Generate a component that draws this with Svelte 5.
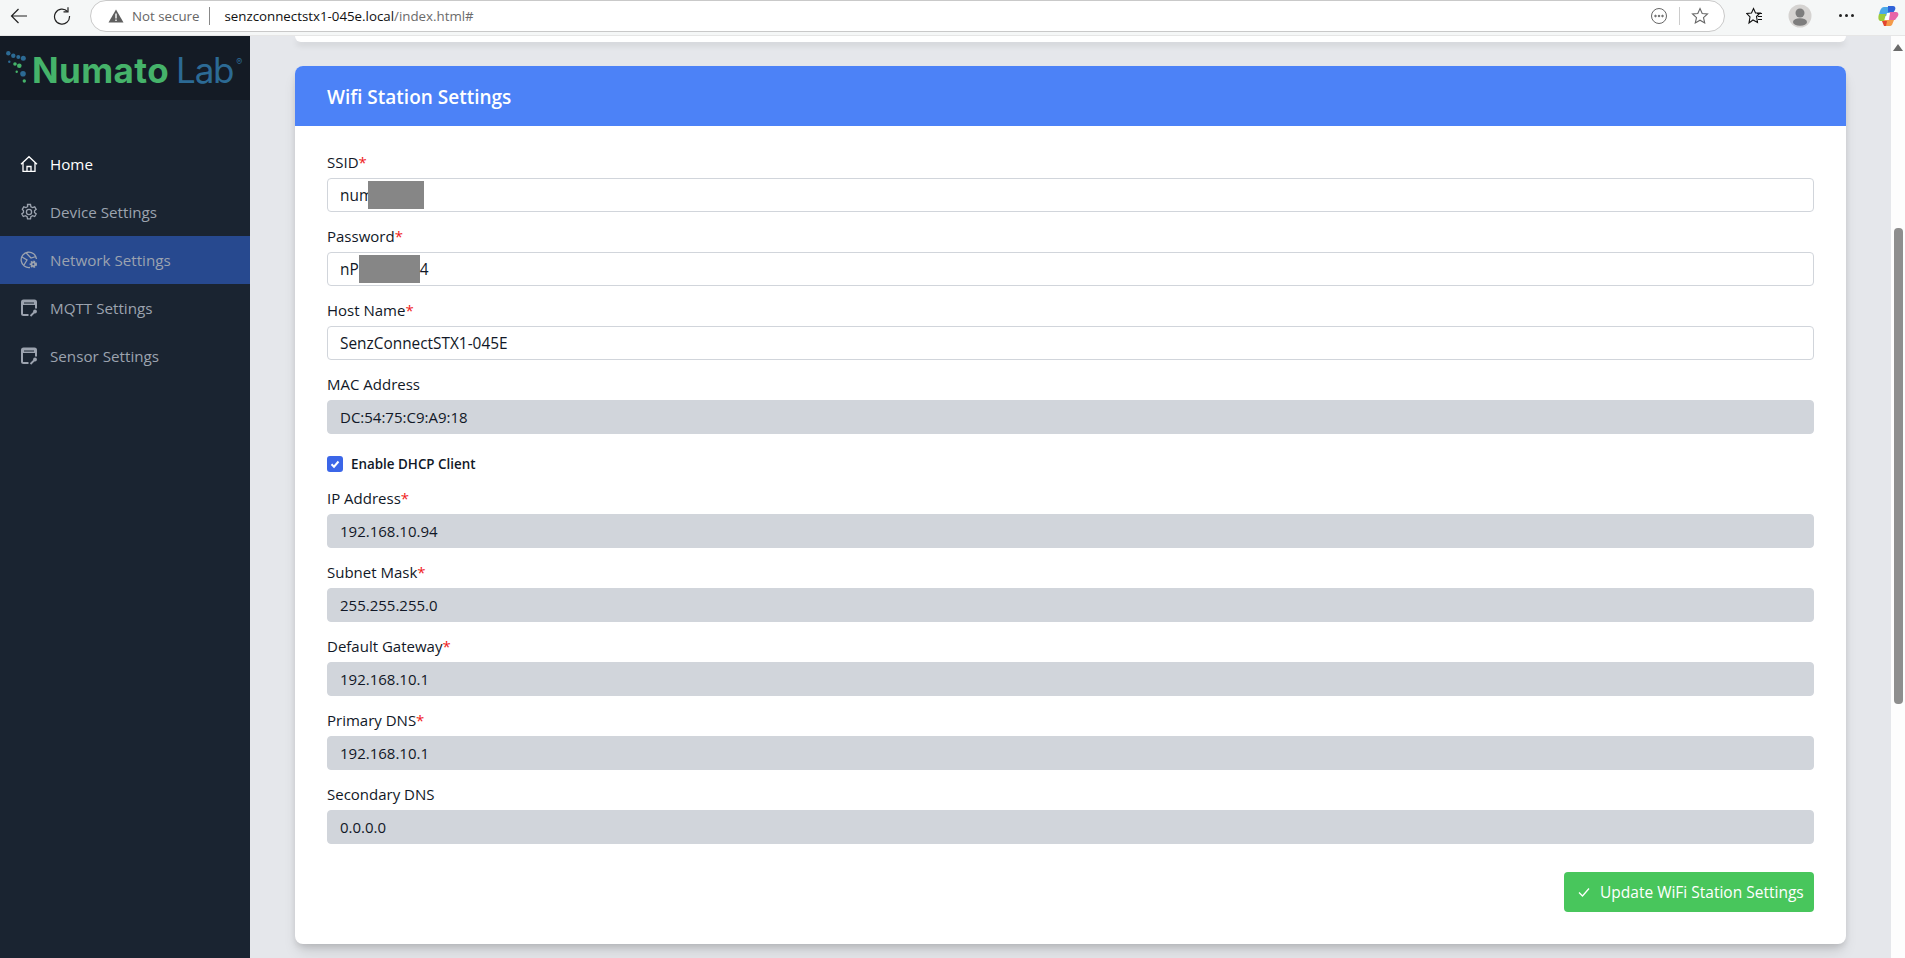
<script>
  const navItems = [
    { label: 'Home', icon: 'home', active: false, current: true },
    { label: 'Device Settings', icon: 'gear' },
    { label: 'Network Settings', icon: 'globe', active: true },
    { label: 'MQTT Settings', icon: 'card' },
    { label: 'Sensor Settings', icon: 'card' }
  ];

  const topFields = [
    { label: 'SSID', value: 'num', required: true, mask: 'mask-ssid' },
    { label: 'Password', value: 'nP', tail: '4', required: true, mask: 'mask-pass' },
    { label: 'Host Name', value: 'SenzConnectSTX1-045E', required: true },
    { label: 'MAC Address', value: 'DC:54:75:C9:A9:18', disabled: true }
  ];

  const ipFields = [
    { label: 'IP Address', value: '192.168.10.94', required: true, disabled: true },
    { label: 'Subnet Mask', value: '255.255.255.0', required: true, disabled: true },
    { label: 'Default Gateway', value: '192.168.10.1', required: true, disabled: true },
    { label: 'Primary DNS', value: '192.168.10.1', required: true, disabled: true },
    { label: 'Secondary DNS', value: '0.0.0.0', disabled: true }
  ];
</script>

{#snippet field(f)}
  <div class="field">
    <div class="label">{f.label}{#if f.required}<span class="req">*</span>{/if}</div>
    <div class="input" class:disabled={f.disabled}>
      <span>{f.value}</span>
      {#if f.mask}<span class="mask {f.mask}"></span>{/if}
      {#if f.tail}<span>{f.tail}</span>{/if}
    </div>
  </div>
{/snippet}

<div class="window">
  <header class="toolbar">
    <svg class="tb-back" width="18" height="18" viewBox="0 0 18 18" fill="none" stroke="#222" stroke-width="1.2"><path d="M17 9H1.500M8.500 2 1.500 9l7 7" /></svg>
    <svg class="tb-reload" width="18" height="18" viewBox="0 0 18 18" fill="none" stroke="#222" stroke-width="1.2"><path d="M14.500 4.500A7.500 7.500 0 1 0 16.500 9" /><path d="M10.500 4.800h4.500v-4.500" /></svg>
    <div class="addr">
      <svg width="16" height="14" viewBox="0 0 16 14"><path d="M8 0.500 15.500 13.500H0.500Z" fill="#5f5f5f" /><rect x="7.300" y="4.500" width="1.400" height="5" fill="#fff" /><rect x="7.300" y="10.500" width="1.400" height="1.500" fill="#fff" /></svg>
      <span class="insecure">Not secure</span>
      <span class="addr-sep"></span>
      <span class="url">senzconnectstx1-045e.local<span class="url-path">/index.html#</span></span>
      <span class="addr-spacer"></span>
      <svg width="18" height="18" viewBox="0 0 18 18" fill="none" stroke="#666" stroke-width="1"><circle cx="9" cy="9" r="7.500" /><circle cx="5.500" cy="9" r="0.800" fill="#666" /><circle cx="9" cy="9" r="0.800" fill="#666" /><circle cx="12.500" cy="9" r="0.800" fill="#666" /></svg>
      <span class="addr-sep2"></span>
      <svg width="18" height="18" viewBox="0 0 18 18" fill="none" stroke="#666" stroke-width="1.100"><path d="M9 1.500 11.200 6.500 16.500 7 12.500 10.600 13.700 16 9 13.200 4.300 16 5.500 10.600 1.500 7 6.800 6.500Z" /></svg>
    </div>
    <svg class="tb-favs" width="18" height="18" viewBox="0 0 18 18" fill="none" stroke="#111" stroke-width="1.100"><path d="M7.500 1.500 9.500 6H14L10.500 9.500 11.500 15.500 7 13 3 16 4 10 0.800 6.500 5.500 6Z" /><path d="M11 6.500h5M12 9.500h4M12 12.500h4" /></svg>
    <svg class="tb-avatar" width="24" height="24" viewBox="0 0 24 24"><circle cx="12" cy="12" r="11.500" fill="#d5d3d1" /><circle cx="12" cy="9" r="4.500" fill="#7d7d7d" /><ellipse cx="12" cy="18" rx="7" ry="3.800" fill="#7d7d7d" /></svg>
    <div class="tb-dots"><i></i><i></i><i></i></div>
    <svg class="tb-copilot" width="22" height="22" viewBox="0 0 22 22">
      <path d="M7 2h8l-4 9H2C2 7 4 2 7 2Z" fill="#4aa8e8" />
      <path d="M11 1h5c2 0 3 2 2 4l-2 3-5-1Z" fill="#2f62d8" />
      <path d="M13 7h6c2 0 3 2 2 4l-3 4h-6Z" fill="#e765a8" />
      <path d="M2 9h7l-2 7H3C1 15 1 12 2 9Z" fill="#9ccb3c" />
      <path d="M7 15h10l-2 5c-1 1-2 1-3 1H7Z" fill="#f49a4a" />
      <path d="M5 16h5l-1 5H7Z" fill="#e2452f" />
      <path d="M10 8h3l-2 7H8Z" fill="#fff" />
    </svg>
  </header>

  <div class="body">
    <aside class="sidebar">
      <div class="logo">
        <svg class="logo-mark" width="24" height="34" viewBox="0 0 24 34" fill="#2c6a94">
          <circle cx="3.300" cy="2.300" r="2.200" /><circle cx="8.300" cy="4.700" r="2.200" /><circle cx="13.300" cy="6" r="2" /><circle cx="18.300" cy="7.300" r="2.500" />
          <circle cx="4.300" cy="10.700" r="1.200" />
          <circle cx="10" cy="13" r="1.800" fill="#45b36a" /><circle cx="14.300" cy="14.700" r="2.300" fill="#45b36a" />
          <circle cx="11.700" cy="20.700" r="1.200" fill="#45b36a" /><circle cx="18" cy="22.700" r="2.800" />
          <circle cx="19.300" cy="30" r="1.700" fill="#45b36a" />
        </svg>
        <span class="logo-numato">Numato</span><span class="logo-lab">Lab</span><span class="logo-reg">®</span>
      </div>
      <nav class="nav">
        {#each navItems as item}
          <a class="nav-item" class:active={item.active} class:current={item.current} href="#top">
            <svg width="18" height="18" viewBox="0 0 18 18" fill="none" stroke="currentColor" stroke-width="1.300">
              {#if item.icon === 'home'}
                <path d="M1 9.200 9 1.700l8 7.500M3 7.800V16.300H15V7.800M7 16.300V11.500H11V16.300" />
              {:else if item.icon === 'gear'}
                <circle cx="9" cy="9" r="2.600" />
                <path d="M7.500 1.500h3l.4 2.200 1.700.9 2.100-.8 1.500 2.500-1.700 1.500v1.700l1.700 1.500-1.500 2.500-2.100-.8-1.700.9-.4 2.200h-3l-.4-2.200-1.700-.9-2.100.8-1.500-2.500 1.700-1.500V7.800L2.300 6.300l1.500-2.500 2.100.8 1.700-.9Z" />
              {:else if item.icon === 'globe'}
                <path d="M10 16.500A7.700 7.700 0 1 1 16.500 8" />
                <path d="M2 6 7 9l-3 5M6 1.800 11 7l5-1.500" />
                <circle cx="13.300" cy="13.300" r="2.700" fill="currentColor" stroke-width="2" stroke-dasharray="1.500 1" />
                <circle cx="13.300" cy="13.300" r="1" fill="#27498f" stroke="none" />
              {:else}
                <path d="M8.500 16H3.500C2.500 16 2 15.500 2 14.500V3c0-1 .5-1.500 1.500-1.500h11c1 0 1.500.5 1.500 1.500v6.500" stroke-width="2" />
                <path d="M2 2h14v4H2Z M4 3.500v1h10v-1Z" fill="currentColor" fill-rule="evenodd" stroke="none" />
                <path d="M10.500 17 14 13.500" stroke-width="1.800" />
                <circle cx="15" cy="12.500" r="1.900" fill="currentColor" stroke="none" />
              {/if}
            </svg>
            <span>{item.label}</span>
          </a>
        {/each}
      </nav>
    </aside>

    <main class="main">
      <div class="prev-card"></div>
      <section class="card">
        <h2 class="card-head">Wifi Station Settings</h2>
        <div class="card-body">
          {#each topFields as f}{@render field(f)}{/each}
          <label class="check">
            <span class="box"><svg width="12" height="12" viewBox="0 0 12 12" fill="none" stroke="#fff" stroke-width="2"><path d="M2.500 6.300 5 8.700 9.500 3.500" /></svg></span>
            Enable DHCP Client
          </label>
          {#each ipFields as f}{@render field(f)}{/each}
          <div class="actions">
            <button class="update">
              <svg width="14" height="14" viewBox="0 0 14 14" fill="none" stroke="#fff" stroke-width="1.300"><path d="M2 7.500 5.500 11 12 3.500" /></svg>
              Update WiFi Station Settings
            </button>
          </div>
        </div>
      </section>
    </main>

    <div class="scrollbar">
      <div class="arrow"></div>
      <div class="thumb"></div>
    </div>
  </div>
</div>

<style>
  :global(body) {
    margin: 0;
    font-family: "Open Sans", "Noto Sans", "Liberation Sans", sans-serif;
  }

  .window {
    width: 1905px;
    height: 958px;
    display: flex;
    flex-direction: column;
    overflow: hidden;
    color: #111827;
  }

  .toolbar {
    height: 36px;
    flex: none;
    display: flex;
    align-items: center;
    background: #f5f7f7;
    box-sizing: border-box;
    padding: 0 0 4px 10px;
    border-bottom: 1px solid #e6e6e6;
  }

  .toolbar > * { flex: none; }

  .tb-reload { margin-left: 25px; }

  .addr {
    margin-left: 19px;
    width: 1635px;
    height: 32px;
    box-sizing: border-box;
    border: 1px solid #c9c9c9;
    border-radius: 16px;
    background: #fff;
    display: flex;
    align-items: center;
    padding: 0 15px 0 17px;
    font-size: 13.3px;
  }

  .insecure { color: #666; margin-left: 8px; }
  .addr-sep { width: 1px; height: 18px; background: #888; margin: 0 14px 0 10px; }
  .url { color: #111; }
  .url-path { color: #6b6b6b; }
  .addr-spacer { flex: 1; }
  .addr-sep2 { width: 1px; height: 18px; background: #ccc; margin: 0 11px; }

  .tb-favs { margin-left: 21px; }
  .tb-avatar { margin-left: 24px; }

  .tb-dots { margin-left: 27px; display: flex; gap: 3px; }
  .tb-dots i { width: 3px; height: 3px; border-radius: 50%; background: #222; }
  .tb-copilot { margin-left: 23px; }

  .body {
    flex: 1;
    min-height: 0;
    display: flex;
    background: #e5e7eb;
  }

  .sidebar {
    width: 250px;
    flex: none;
    background: #1a2431;
  }

  .logo {
    height: 64px;
    background: #141b25;
    display: flex;
    align-items: center;
    padding-left: 5px;
    box-sizing: border-box;
    font-family: Inter, sans-serif;
    font-size: 35px;
  }

  .logo-mark { margin-right: 3px; }

  .logo-numato {
    color: #45b36a;
    font-weight: 700;
    letter-spacing: .4px;
    margin-top: 4px;
  }

  .logo-lab {
    color: #2c6a94;
    font-weight: 400;
    letter-spacing: -1.2px;
    margin: 4px 0 0 7px;
  }

  .logo-reg { color: #2c6a94; font-size: 9px; align-self: flex-start; margin: 20px 0 0 3px; }

  .nav { padding-top: 40px; }

  .nav-item {
    height: 48px;
    display: flex;
    align-items: center;
    gap: 12px;
    padding-left: 20px;
    font-size: 15.2px;
    color: #9ca3af;
    text-decoration: none;
  }

  .nav-item.current { color: #fff; }
  .nav-item.active { background: #27498f; }

  .main {
    flex: 1;
    min-width: 0;
    padding: 0 45px;
    overflow: hidden;
  }

  .prev-card {
    height: 6px;
    background: #fff;
    border-radius: 0 0 8px 8px;
    box-shadow: 0 4px 6px -1px rgba(0, 0, 0, .12), 0 10px 15px -3px rgba(0, 0, 0, .12);
    margin-bottom: 24px;
  }

  .card {
    background: #fff;
    border-radius: 8px;
    box-shadow: 0 4px 6px -1px rgba(0, 0, 0, .12), 0 10px 15px -3px rgba(0, 0, 0, .12);
  }

  .card-head {
    margin: 0;
    height: 60px;
    line-height: 62px;
    padding-left: 32px;
    background: #4c82f7;
    color: #fff;
    font-size: 19px;
    font-weight: 600;
    border-radius: 8px 8px 0 0;
  }

  .card-body { padding: 24px 32px 32px; }

  .field { margin-bottom: 12px; }

  .label {
    height: 28px;
    line-height: 24px;
    font-size: 15px;
  }

  .req { color: #ef1c1c; }

  .input {
    height: 34px;
    box-sizing: border-box;
    border: 1px solid #d1d5db;
    border-radius: 4px;
    display: flex;
    align-items: center;
    padding-left: 12px;
    font-size: 15.4px;
    background: #fff;
  }

  .input.disabled { background: #d1d5db; font-size: 15px; }

  .mask { background: #868686; height: 28px; }
  .mask-ssid { width: 56px; margin-left: -5px; }
  .mask-pass { width: 61px; }

  .check {
    display: flex;
    align-items: center;
    gap: 8px;
    height: 28px;
    margin: 16px 0 8px;
    font-size: 13.4px;
    font-weight: 600;
  }

  .box {
    width: 16px;
    height: 16px;
    border-radius: 3px;
    background: #3b66e8;
    display: flex;
    align-items: center;
    justify-content: center;
  }

  .actions {
    display: flex;
    justify-content: flex-end;
    padding-top: 16px;
  }

  .update {
    width: 250px;
    height: 40px;
    border: none;
    border-radius: 4px;
    background: #48c65c;
    color: #fff;
    font: inherit;
    font-size: 15.5px;
    display: flex;
    align-items: center;
    gap: 9px;
    padding: 0 0 0 13px;
    white-space: nowrap;
  }

  .scrollbar {
    width: 14px;
    flex: none;
    background: #fdfdfd;
    position: relative;
  }

  .arrow {
    position: absolute;
    left: 2px;
    top: 8px;
    border: 5px solid transparent;
    border-top: none;
    border-bottom: 7px solid #6b6b6b;
  }

  .thumb {
    position: absolute;
    left: 3px;
    top: 192px;
    width: 9px;
    height: 476px;
    background: #8e8e8e;
    border-radius: 4px;
  }
</style>
